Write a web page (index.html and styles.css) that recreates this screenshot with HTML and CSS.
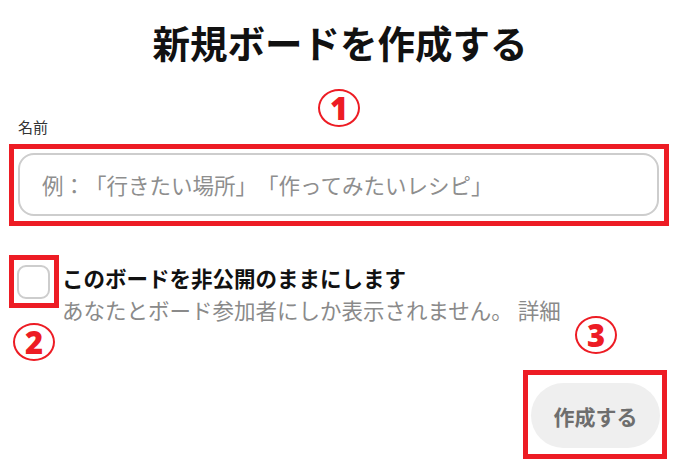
FILE: index.html
```html
<!DOCTYPE html>
<html lang="ja">
<head>
<meta charset="utf-8">
<title>新規ボードを作成する</title>
<link rel="stylesheet" href="styles.css">
</head>
<body>
<div class="page">
  <h1 class="title">新規ボードを作成する</h1>
  <label class="field-label" for="board-name">名前</label>
  <div class="mark mark-input">
    <input id="board-name" class="name-input" type="text" placeholder="例：「行きたい場所」「作ってみたいレシピ」">
  </div>
  <div class="private-row">
    <div class="mark mark-check"><input type="checkbox" class="check" aria-label="非公開"></div>
    <div class="private-text">
      <div class="private-title">このボードを非公開のままにします</div>
      <div class="private-desc">あなたとボード参加者にしか表示されません。 <span class="more">詳細</span></div>
    </div>
  </div>
  <div class="footer">
    <div class="mark mark-btn"><button class="create" type="button">作成する</button></div>
  </div>
  <span class="num num1">1</span>
  <span class="num num2">2</span>
  <span class="num num3">3</span>
</div>
</body>
</html>
```

FILE: styles.css
```css
html, body {
  margin: 0;
  padding: 0;
  background: #ffffff;
}
body {
  font-family: "Noto Sans CJK JP", "Noto Sans", sans-serif;
  color: #111111;
  text-spacing-trim: space-all;
}
.page {
  position: relative;
  width: 680px;
  height: 474px;
  overflow: hidden;
}
.title {
  margin: 0;
  padding-top: 20px;
  font-size: 37.5px;
  line-height: 44px;
  font-weight: 700;
  text-align: center;
  color: #111111;
}
.field-label {
  display: block;
  margin-top: 53px;
  padding-left: 18px;
  font-size: 15px;
  line-height: 20px;
  color: #333333;
}
.mark {
  border: 5px solid #ed1c24;
}
.mark-input {
  margin: 7px 11px 0 9px;
  padding: 4px 5px 5px 4px;
}
.name-input {
  display: block;
  width: 100%;
  height: 63px;
  box-sizing: border-box;
  margin: 0;
  border: 2px solid #cdcdcd;
  border-radius: 16px;
  padding: 0 20px 0 22px;
  font-family: inherit;
  font-size: 21.5px;
  color: #111111;
  background: #ffffff;
  outline: none;
  text-spacing-trim: space-all;
}
.name-input::placeholder {
  color: #8e8e8e;
}
.private-row {
  display: flex;
  align-items: flex-start;
  margin-top: 29px;
  padding-left: 9px;
}
.mark-check {
  padding: 5px 4px 4px 3px;
}
.check {
  appearance: none;
  -webkit-appearance: none;
  display: block;
  margin: 0;
  width: 33px;
  height: 34px;
  box-sizing: border-box;
  border: 2px solid #cdcdcd;
  border-radius: 9px;
  background: #ffffff;
}
.private-text {
  margin-left: 3px;
  padding-top: 7px;
  font-size: 21.5px;
  line-height: 32px;
}
.private-title {
  font-weight: 700;
  color: #111111;
}
.private-desc {
  color: #8a8a8a;
}
.footer {
  display: flex;
  justify-content: flex-end;
  margin-top: 44px;
  padding-right: 13px;
}
.mark-btn {
  padding: 8px 2px 6px 3px;
}
.create {
  display: block;
  width: 129px;
  height: 65px;
  margin: 0;
  padding: 0;
  border: none;
  border-radius: 33px;
  background: #efefef;
  color: #6e6e6e;
  font-family: inherit;
  font-size: 21px;
  font-weight: 700;
}
.num {
  position: absolute;
  width: 42px;
  height: 38px;
  box-sizing: border-box;
  border: 2px solid #ed1c24;
  border-radius: 50%;
  display: flex;
  align-items: center;
  justify-content: center;
  color: #ed1c24;
  font-family: "Noto Sans", "Noto Sans CJK JP", sans-serif;
  font-size: 31px;
  font-weight: 900;
  line-height: 1;
}
.num1 {
  left: 318px;
  top: 89px;
}
.num2 {
  left: 13px;
  top: 323px;
}
.num3 {
  left: 575px;
  top: 316px;
}
```
